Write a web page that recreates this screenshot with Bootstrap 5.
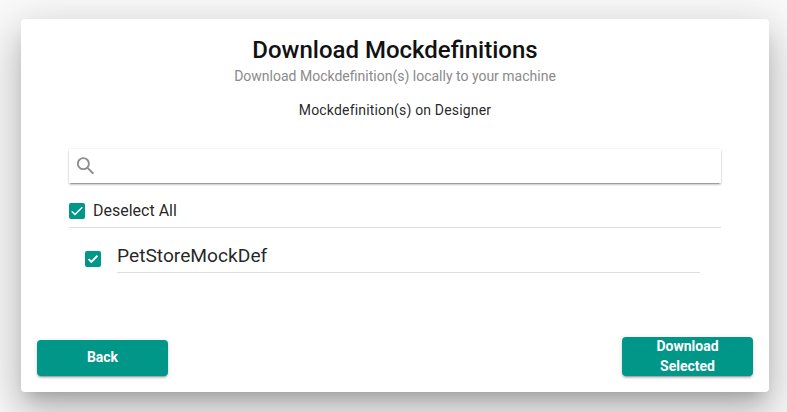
<!DOCTYPE html>
<html lang="en">
<head>
<meta charset="utf-8">
<title>Download Mockdefinitions</title>
<meta name="viewport" content="width=device-width, initial-scale=1">
<link href="https://cdn.jsdelivr.net/npm/bootstrap@5.3.0/dist/css/bootstrap.min.css" rel="stylesheet">
<style>
body{background:#fafafa;font-family:Roboto,sans-serif;color:rgba(0,0,0,.87);height:412px;padding:19px 18px 20px 21px}
.dialog{height:373px;border-radius:4px;padding:16px;box-shadow:0 11px 15px -7px rgba(0,0,0,.2),0 24px 38px 3px rgba(0,0,0,.14),0 9px 46px 8px rgba(0,0,0,.12)}
.dialog-title{font-size:24px;line-height:30px;font-weight:500;color:#111}
.dialog-sub{font-size:14px;line-height:20px;color:#8a8a8a;margin-top:1px}
.dialog-caption{font-size:14px;line-height:20px;letter-spacing:.17px;margin-top:14px}
.listing{margin:29px 32px 0}
.search{height:34px;padding-left:7px;box-shadow:0 3px 1px -2px rgba(0,0,0,.2),0 2px 2px 0 rgba(0,0,0,.14),0 1px 2px 0 rgba(0,0,0,.12),0 0 1px rgba(0,0,0,.15)}
.search svg{width:20px;height:20px;margin-top:-1px}
.search input{font-size:16px}
.tick{width:16px;height:16px;border-radius:2px;background:#009688;flex:none}
.tick svg{display:block}
.line{border-bottom:1px solid #dedede}
.all-row{height:45px;padding-top:11px;font-size:16px;gap:8px}
.item-row{height:45px;padding-left:16px;padding-right:21px;gap:16px}
.item-row .tick{margin-bottom:6px}
.item-name{font-size:19.2px;line-height:24px;padding-top:16px}
.action{--bs-btn-color:#fff;--bs-btn-hover-color:#fff;--bs-btn-hover-bg:#00897b;width:131px;min-height:36px;padding:0 16px 2px;border:0;border-radius:4px;background:#009688;font-size:14px;line-height:20px;font-weight:700;box-shadow:0 3px 1px -2px rgba(0,0,0,.2),0 2px 2px 0 rgba(0,0,0,.14),0 1px 5px 0 rgba(0,0,0,.12)}
.action-tall{height:39px}
.action-tall span{display:block;margin-top:-1px}
</style>
</head>
<body class="overflow-hidden">
<main class="dialog bg-white d-flex flex-column">
  <header class="text-center">
    <h1 class="dialog-title mb-0">Download Mockdefinitions</h1>
    <p class="dialog-sub mb-0">Download Mockdefinition(s) locally to your machine</p>
    <p class="dialog-caption mb-0">Mockdefinition(s) on Designer</p>
  </header>
  <section class="listing">
    <div class="search d-flex align-items-center">
      <svg viewBox="0 0 20 20" fill="none" stroke="#8c8c8c" stroke-width="1.9"><circle cx="7.6" cy="7.6" r="5.7"/><path d="M11.7 11.7l6.3 6.3"/></svg>
      <input class="form-control border-0 bg-transparent shadow-none py-0" type="text" aria-label="Search">
    </div>
    <div class="all-row line d-flex align-items-center">
      <span class="tick"><svg width="16" height="16" viewBox="0 0 16 16" fill="none" stroke="#fff" stroke-width="1.4"><path d="M2.7 8.3l3.3 3.3 7.3-7.3"/></svg></span>
      <span>Deselect All</span>
    </div>
    <div class="item-row d-flex">
      <span class="tick align-self-end"><svg width="16" height="16" viewBox="0 0 16 16" fill="none" stroke="#fff" stroke-width="2"><path d="M3.6 8.1l2.8 2.8 6-6.2"/></svg></span>
      <div class="item-name line flex-grow-1">PetStoreMockDef</div>
    </div>
  </section>
  <footer class="d-flex justify-content-between align-items-end mt-auto">
    <button class="btn action" type="button">Back</button>
    <button class="btn action action-tall" type="button"><span>Download Selected</span></button>
  </footer>
</main>
<script src="https://cdn.jsdelivr.net/npm/bootstrap@5.3.0/dist/js/bootstrap.bundle.min.js"></script>
</body>
</html>
